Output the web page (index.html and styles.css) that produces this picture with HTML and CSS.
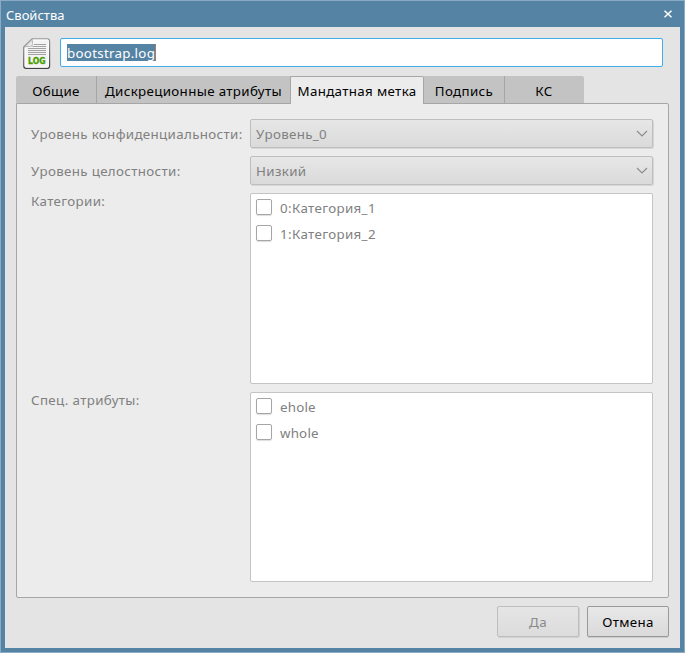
FILE: index.html
```html
<!DOCTYPE html>
<html lang="ru">
<head>
<meta charset="utf-8">
<title>Свойства</title>
<link rel="stylesheet" href="styles.css">
</head>
<body>
<div class="window">
  <header class="titlebar">
    <span class="title">Свойства</span>
    <svg class="close" width="8" height="8" viewBox="0 0 8 8"><path d="M.5 .7 7.5 7.300M7.5 .7 .5 7.300" stroke="#fff" stroke-width="1.5"/></svg>
  </header>
  <main class="content">
    <div class="file-row">
      <svg class="file-icon" width="28" height="32" viewBox="0 0 28 32">
        <defs>
          <linearGradient id="edge" x1="0" y1="0" x2="0" y2="1"><stop offset="0" stop-color="#999"/><stop offset="1" stop-color="#444"/></linearGradient>
          <linearGradient id="fold" x1="0" y1="0" x2="1" y2="1"><stop offset="0" stop-color="#888"/><stop offset=".5" stop-color="#ccc"/><stop offset=".8" stop-color="#fff"/><stop offset="1" stop-color="#999"/></linearGradient>
        </defs>
        <path d="M9 .9H24.5Q26.5 .9 26.5 3V28Q26.5 30.3 24.5 30.3H3Q.9 30.3 .9 28V9Z" fill="#f4f4f4" stroke="url(#edge)" stroke-width="1.4"/>
        <path d="M9.3 2H24.2Q25.4 2 25.4 3.3V27.8Q25.4 29.2 24.2 29.2H3.3Q2 29.2 2 27.8V9.5Z" fill="none" stroke="#fff"/>
        <path d="M11 6.5H23M9.500 8.500H23M5 10.500H23M5 12.500H23M5 14.500H23M5 16.500H23" stroke="#a2a2a2"/>
        <path d="M9 1Q10 4.5 9 8Q5 8.200 1 9Z" fill="url(#fold)" stroke="#999" stroke-width=".7"/>
        <text class="file-type" x="5" y="26" textLength="17.500" lengthAdjust="spacingAndGlyphs">LOG</text>
      </svg>
      <div class="name-field"><span class="selected">bootstrap.log</span></div>
    </div>
    <nav class="tabs">
      <div class="tab general">Общие</div>
      <div class="tab discretionary">Дискреционные атрибуты</div>
      <div class="tab active">Мандатная метка</div>
      <div class="tab signature">Подпись</div>
      <div class="tab control">КС</div>
    </nav>
    <section class="pane">
      <div class="label">Уровень конфиденциальности:</div>
      <div class="select"><span>Уровень_0</span><svg width="12" height="8" viewBox="0 0 12 8"><path d="M1 1 6 6 11 1" fill="none" stroke="#8b8b8b" stroke-width="1.1"/></svg></div>
      <div class="label">Уровень целостности:</div>
      <div class="select"><span>Низкий</span><svg width="12" height="8" viewBox="0 0 12 8"><path d="M1 1 6 6 11 1" fill="none" stroke="#8b8b8b" stroke-width="1.1"/></svg></div>
      <div class="label top">Категории:</div>
      <div class="list categories">
        <div class="item"><i class="box"></i><span>0:Категория_1</span></div>
        <div class="item"><i class="box"></i><span>1:Категория_2</span></div>
      </div>
      <div class="label top">Спец. атрибуты:</div>
      <div class="list">
        <div class="item latin"><i class="box"></i><span>ehole</span></div>
        <div class="item latin"><i class="box"></i><span>whole</span></div>
      </div>
    </section>
    <footer class="actions">
      <div class="button disabled">Да</div>
      <div class="button">Отмена</div>
    </footer>
  </main>
</div>
</body>
</html>
```
FILE: styles.css
```css
* { box-sizing: border-box; }
body {
  margin: 0;
  font: 13.33px/18px "Noto Sans", sans-serif;
  letter-spacing: .35px;
  color: #000;
}
.window {
  width: 685px;
  height: 653px;
  border: 1px solid #8aabc3;
  background: #5583a4;
  padding: 0 4px 4px;
}
.titlebar {
  height: 26px;
  margin: 0 -4px;
  padding: 3px 12px 0 5px;
  display: flex;
  justify-content: space-between;
  color: #fff;
  font-size: 13px;
  line-height: 22px;
  letter-spacing: 0;
}
.close { margin-top: 6px; }
.content {
  height: 621px;
  background: #e4e4e4;
  padding: 11px 11px 0;
}
.file-row { display: flex; padding: 0 6px 0 7px; height: 38px; }
.file-icon { margin-right: 9px; }
.file-type { font: bold 8px "DejaVu Sans", sans-serif; letter-spacing: 0; fill: #4a9d00; stroke: #4a9d00; stroke-width: .3px; }
.name-field {
  flex: 1;
  height: 29px;
  border: 1px solid #3daee9;
  border-radius: 2px;
  background: #fff;
  padding: 5px 6px;
}
.selected {
  display: inline-block;
  height: 17px;
  line-height: 18px;
  background: #5583a4;
  color: #fff;
  letter-spacing: .28px;
  border-right: 1px solid #aa7c5b;
}
.tabs { display: flex; height: 27px; }
.tab {
  background: #c3c3c3;
  border-right: 1px solid #a6a6a6;
  padding-top: 6px;
  text-align: center;
  white-space: nowrap;
}
.general { width: 81px; border-radius: 2px 0 0; }
.discretionary { width: 194px; margin-right: -1px; }
.active {
  width: 134px;
  height: 28px;
  position: relative;
  background: #ececec;
  border: 1px solid #a6a6a6;
  border-bottom: 0;
  border-radius: 2px 2px 0 0;
  padding-top: 5px;
}
.signature { width: 81px; }
.control { width: 79px; border: 0; border-radius: 0 2px 0 0; padding-right: 1px; }
.pane {
  height: 495px;
  border: 1px solid #a6a6a6;
  border-radius: 0 2px 2px;
  background: #ececec;
  padding: 15px 15px 0 14px;
  display: grid;
  grid-template-columns: 211px 403px;
  grid-template-rows: 30px 30px 192px 190px;
  column-gap: 8px;
  row-gap: 7px;
  color: #808080;
}
.label { padding-top: 6px; white-space: nowrap; }
.label.top { padding-top: 0; margin-top: -1px; }
.select {
  height: 29px;
  width: 403px;
  border: 1px solid #bebebe;
  border-radius: 2px;
  background: linear-gradient(#e7e7e7, #dadada);
  box-shadow: 1px 1px 0 #d6d6d6;
  display: flex;
  justify-content: space-between;
  align-items: center;
  padding: 0 4px 0 5px;
}
.list {
  border: 1px solid #c4c4c4;
  border-radius: 2px;
  background: #fff;
  padding: 1px 5px;
}
.categories { height: 191px; }
.item { height: 26px; display: flex; align-items: center; gap: 8px; }
.latin { letter-spacing: .2px; }
.box {
  width: 16px;
  height: 16px;
  margin-bottom: 2px;
  border: 1px solid #a6a6a6;
  border-radius: 2px;
  box-shadow: 0 1px 1px #ddd;
}
.actions { display: flex; justify-content: flex-end; gap: 8px; padding-top: 8px; }
.button {
  width: 82px;
  height: 31px;
  border: 1px solid #999;
  border-radius: 2px;
  background: linear-gradient(#e8e8e8, #dadada);
  box-shadow: 0 1px 0 #ccc;
  padding-top: 6px;
  text-align: center;
}
.disabled { color: #8a8a8a; border-color: #bebebe; background: linear-gradient(#e5e5e5, #dcdcdc); box-shadow: 1px 1px 0 #d0d0d0; }
```
